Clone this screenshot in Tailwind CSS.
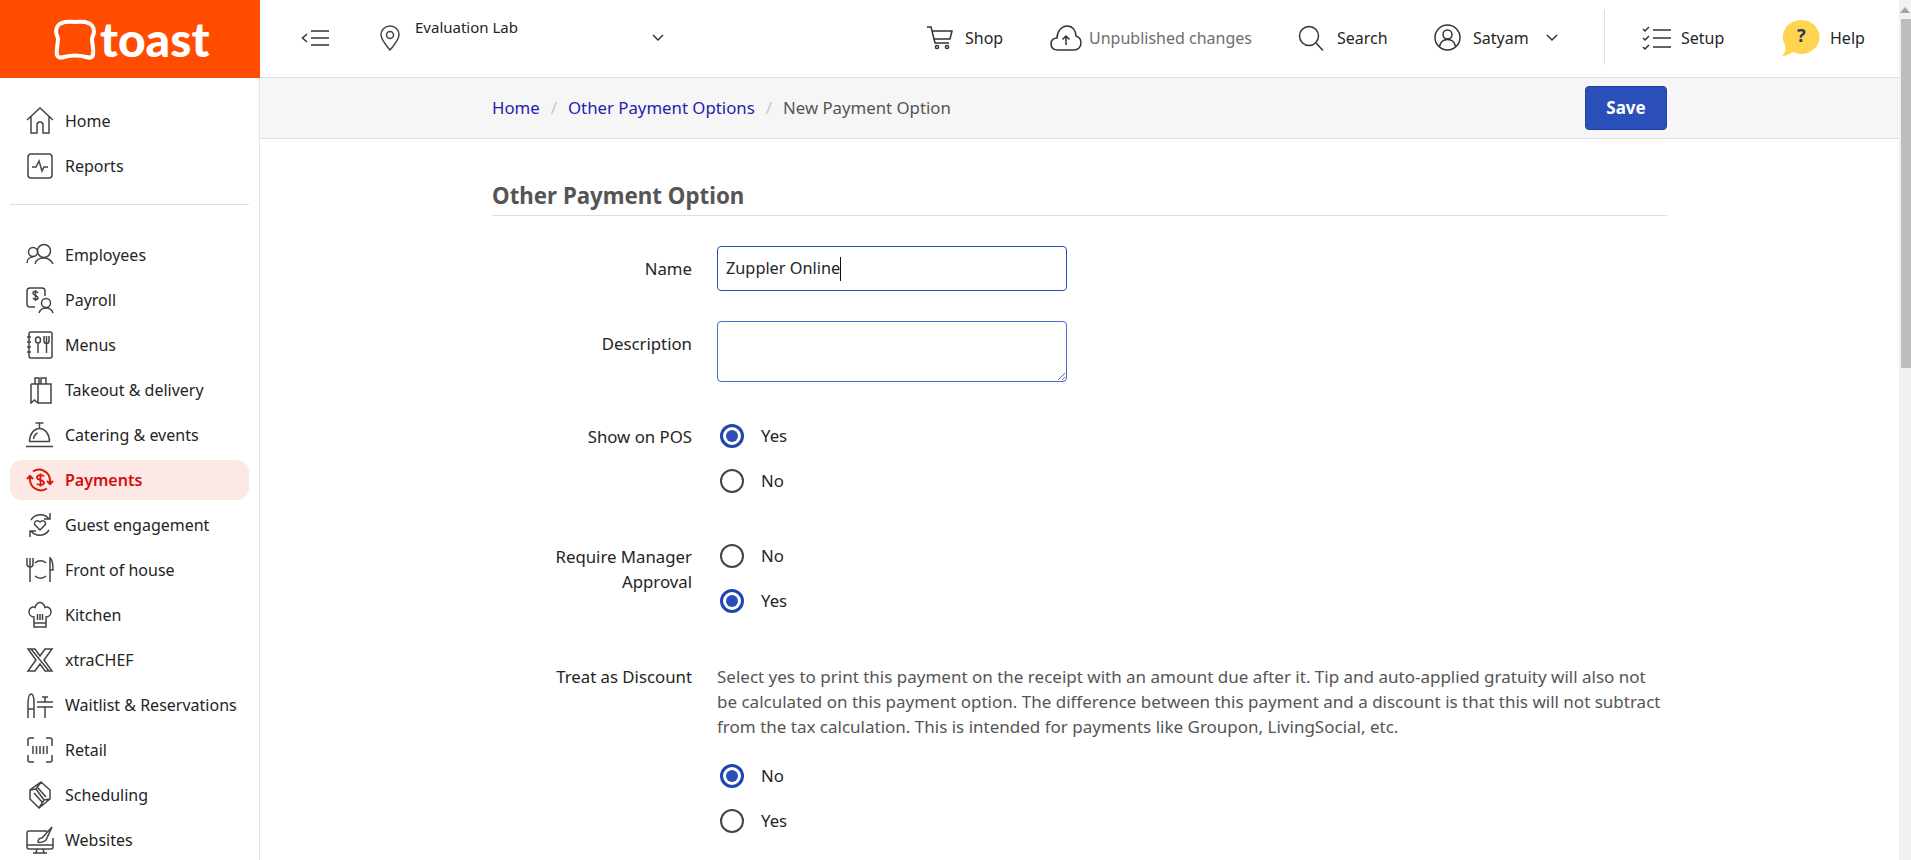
<!DOCTYPE html>
<html lang="en">
<head>
    <meta charset="UTF-8">
    <meta name="viewport" content="width=device-width, initial-scale=1.0">
    <title>New Payment Option</title>
    <script src="https://cdn.jsdelivr.net/npm/@tailwindcss/browser@4"></script>
</head>
<body class="h-[860px] overflow-hidden bg-white font-['Noto_Sans',sans-serif] text-[16px] text-[#252525]">
<div class="flex h-[860px]">
    <div class="w-[1899px] flex flex-col shrink-0">
        <!-- top bar -->
        <header class="h-[78px] flex shrink-0">
            <div class="w-[260px] h-[78px] bg-[#ff4c00] flex items-center shrink-0 pl-[54px] text-white">
                <svg class="w-[42px] h-[42px] shrink-0 mt-[2px]" viewBox="0 0 42 42" fill="none" stroke="white" stroke-width="4" stroke-linejoin="round"><path d="M21 3c5 0 9-1 13 1 4 1 6 5 6 9 0 3-2 4-2 7 0 5 2 10 1 16-1 3-4 3-7 2-7-2-15-2-22 0-3 1-6 1-7-2-1-6 1-11 1-16 0-3-2-4-2-7 0-4 2-8 6-9 4-2 8-1 13-1z"/></svg>
                <span class="ml-[4px] text-[48px] leading-none font-['Lato',sans-serif] font-black">toast</span>
            </div>
            <div class="flex-1 flex items-center border-b border-[#e0e0e0] pb-[2px]">
                <svg class="ml-[41px] w-[28px] h-[18px] shrink-0" viewBox="0 0 28 18" fill="none" stroke="#333" stroke-width="1.5"><path d="M6 5 1.500 9 6 13M10 2h18M10 9h18M10 16h18"/></svg>
                <svg class="ml-[51px] w-[20px] h-[26px] shrink-0" viewBox="0 0 20 26" fill="none" stroke="#444" stroke-width="1.5"><path d="M10 25C6 20 1 15 1 9.500a9 8.500 0 0 1 18 0C19 15 14 20 10 25z"/><circle cx="10" cy="10" r="3.500"/></svg>
                <span class="ml-[15px] w-[237px] -mt-[21px] shrink-0 text-[15px]">Evaluation Lab</span>
                <svg class="w-[12px] h-[8px] shrink-0" viewBox="0 0 12 8" fill="none" stroke="#333" stroke-width="1.500"><path d="m1 1 5 5 5-5"/></svg>
                <svg class="ml-[263px] w-[26px] h-[24px] shrink-0" viewBox="0 0 26 24" fill="none" stroke="#333" stroke-width="1.500"><path d="M0 1h4l4 16h14M5 5h20l-2 8H7"/><circle cx="10" cy="21" r="1.600"/><circle cx="20" cy="21" r="1.600"/></svg>
                <span class="ml-[12px] w-[38px] shrink-0">Shop</span>
                <svg class="ml-[47px] w-[32px] h-[26px] shrink-0" viewBox="0 0 32 26" fill="none" stroke="#333" stroke-width="1.500"><path d="M8 25C3 25 1 22 1 18.500 1 15 4 13 7 13 7 6 12 1 17 1c6 0 9 5 9 10 3 1 5 4 5 7 0 4-3 7-7 7z"/><path d="M16 20v-9M12.500 14.500 16 11l3.500 3.500"/></svg>
                <span class="ml-[7px] w-[163px] text-[#6e6e6e] shrink-0">Unpublished changes</span>
                <svg class="ml-[46px] w-[26px] h-[26px] shrink-0" viewBox="0 0 26 26" fill="none" stroke="#333" stroke-width="1.500"><circle cx="11" cy="11" r="9.500"/><path d="m18 18 7 7.500"/></svg>
                <span class="ml-[13px] w-[52px] shrink-0">Search</span>
                <svg class="ml-[45px] w-[27px] h-[27px] shrink-0" viewBox="0 0 27 27" fill="none" stroke="#333" stroke-width="1.500"><circle cx="13.500" cy="13.500" r="12.500"/><circle cx="13.500" cy="10.500" r="4.500"/><path d="M5.500 22.500c1-5 4-7 8-7s7 2 8 7"/></svg>
                <span class="ml-[12px] w-[73px] shrink-0">Satyam</span>
                <svg class="w-[12px] h-[8px] shrink-0" viewBox="0 0 12 8" fill="none" stroke="#333" stroke-width="1.500"><path d="m1 1 5 5 5-5"/></svg>
                <div class="ml-[46px] w-px h-[55px] bg-[#dedede] shrink-0"></div>
                <svg class="ml-[37px] w-[29px] h-[24px] shrink-0" viewBox="0 0 29 24" fill="none" stroke="#333" stroke-width="1.500"><path d="m1 3 2 2 4-4M1 12l2 2 4-4M1 21l2 2 4-4M11 4h18M11 12h18M11 21h18"/></svg>
                <span class="ml-[10px] w-[44px] shrink-0">Setup</span>
                <div class="relative ml-[55px] w-[40px] h-[38px] shrink-0">
                    <svg class="w-[40px] h-[38px]" viewBox="0 0 40 38"><path d="M21 1a18 17 0 1 1-8 32c-3 2-7 4-11 4 3-3 4-6 3-11A18 17 0 0 1 21 1z" fill="#ffd54f"/></svg>
                    <span class="absolute left-[17px] top-[3px] font-bold text-[18px] text-[#26375f]">?</span>
                </div>
                <span class="ml-[10px] shrink-0">Help</span>
            </div>
        </header>

        <div class="flex flex-1 min-h-0">
            <!-- sidebar -->
            <nav class="w-[260px] border-r border-[#e4e4e4] shrink-0 pt-[23px]">
                <a class="h-[40px] mb-[5px] mx-[10px] rounded-[12px] flex items-center gap-[11px] pl-[16px]">
                    <svg class="w-[28px] h-[28px] shrink-0" viewBox="0 0 28 28" fill="none" stroke="#444" stroke-width="1.500"><path d="M1 13 14 1l13 12M5 10v16h6v-8a3 3 0 0 1 6 0v8h6V10"/></svg><span>Home</span>
                </a>
                <a class="h-[40px] mb-[5px] mx-[10px] rounded-[12px] flex items-center gap-[11px] pl-[16px]">
                    <svg class="w-[28px] h-[28px] shrink-0" viewBox="0 0 28 28" fill="none" stroke="#444" stroke-width="1.500"><rect x="2" y="2" width="24" height="24" rx="3"/><path d="M6 15h4l3-6 3 10 2-4h4"/></svg><span>Reports</span>
                </a>
                <div class="mx-[10px] mt-[18px] mb-[30px] border-t border-[#dedede]"></div>
                <a class="h-[40px] mb-[5px] mx-[10px] rounded-[12px] flex items-center gap-[11px] pl-[16px]">
                    <svg class="w-[28px] h-[28px] shrink-0" viewBox="0 0 28 28" fill="none" stroke="#444" stroke-width="1.500"><circle cx="18" cy="10" r="6.500"/><circle cx="7" cy="11" r="4.500"/><path d="M1 22c0-4 3-6 6-6M9 23c1-4 5-6 9-6s7 2 9 6"/></svg><span>Employees</span>
                </a>
                <a class="h-[40px] mb-[5px] mx-[10px] rounded-[12px] flex items-center gap-[11px] pl-[16px]">
                    <svg class="w-[28px] h-[28px] shrink-0" viewBox="0 0 28 28" fill="none" stroke="#444" stroke-width="1.500"><path d="M9 21H4a3 3 0 0 1-3-3V5a3 3 0 0 1 3-3h12a3 3 0 0 1 3 3v5"/><circle cx="20" cy="17" r="4.500"/><path d="M13 27c1-3 4-5 7-5s6 2 7 5M12 7c-1-2-5-2-5 0 0 3 5 2 5 5 0 2-4 2-5 0M9.500 4v11"/></svg><span>Payroll</span>
                </a>
                <a class="h-[40px] mb-[5px] mx-[10px] rounded-[12px] flex items-center gap-[11px] pl-[16px]">
                    <svg class="w-[28px] h-[28px] shrink-0" viewBox="0 0 28 28" fill="none" stroke="#444" stroke-width="1.500"><rect x="3" y="1" width="23" height="26" rx="2"/><path d="M1 6h4M1 11h4M1 16h4M1 21h4M12 6a2.500 3 0 0 0 0 6 2.500 3 0 0 0 0-6M12 12v10M18 5v5a2.500 2.500 0 0 0 5 0V5M20.500 5v17"/></svg><span>Menus</span>
                </a>
                <a class="h-[40px] mb-[5px] mx-[10px] rounded-[12px] flex items-center gap-[11px] pl-[16px]">
                    <svg class="w-[28px] h-[28px] shrink-0" viewBox="0 0 28 28" fill="none" stroke="#444" stroke-width="1.500"><path d="M5 8h20v19H12M5 8v19l3.500-3 3.500 3V8M9 8V2h4v6M15 8V2h5v6"/></svg><span>Takeout &amp; delivery</span>
                </a>
                <a class="h-[40px] mb-[5px] mx-[10px] rounded-[12px] flex items-center gap-[11px] pl-[16px]">
                    <svg class="w-[28px] h-[28px] shrink-0" viewBox="0 0 28 28" fill="none" stroke="#444" stroke-width="1.500"><path d="M0 25.500h27M3 20.500h21M3.500 20.500a10 13 0 0 1 20 0M13.500 7.500V2M9.500 2h8M7.500 18a6 8 0 0 1 4-6"/></svg><span>Catering &amp; events</span>
                </a>
                <a class="h-[40px] mb-[5px] mx-[10px] rounded-[12px] bg-[#fce8e5] flex items-center gap-[11px] pl-[16px] text-[#d40f0f] font-semibold">
                    <svg class="w-[28px] h-[28px] shrink-0" viewBox="0 0 28 28" fill="none" stroke="#d8190f" stroke-width="2"><path d="M4 11v3a11 11 0 0 0 17 8.500M24 17v-3A11 11 0 0 0 7 5.500M1 13l3-3 3 3M21 15l3 3 3-3"/><path d="M18 10.500c-1-2-7-2-7 .8 0 3.700 7 1.700 7 5.500 0 2.700-6 2.700-7 .8M14.500 7.500v13" stroke-width="1.800"/></svg><span>Payments</span>
                </a>
                <a class="h-[40px] mb-[5px] mx-[10px] rounded-[12px] flex items-center gap-[11px] pl-[16px]">
                    <svg class="w-[28px] h-[28px] shrink-0" viewBox="0 0 28 28" fill="none" stroke="#444" stroke-width="1.500"><path d="M5 9A11 11 0 0 1 23 8M24 2v6h-6M23 19A11 11 0 0 1 5 20M4 26v-6h6M14 19l-5-5c-2-3 2-6 5-3 3-3 7 0 5 3z"/></svg><span>Guest engagement</span>
                </a>
                <a class="h-[40px] mb-[5px] mx-[10px] rounded-[12px] flex items-center gap-[11px] pl-[16px]">
                    <svg class="w-[28px] h-[28px] shrink-0" viewBox="0 0 28 28" fill="none" stroke="#444" stroke-width="1.500"><path d="M1 2v6c0 2 1.500 3 3 3s3-1 3-3V2M4 2v24M9 7c3-3 8-3 11 0M9 20c3 3 8 3 11 0M24 26V2c2 1 3 6 3 12h-3"/></svg><span>Front of house</span>
                </a>
                <a class="h-[40px] mb-[5px] mx-[10px] rounded-[12px] flex items-center gap-[11px] pl-[16px]">
                    <svg class="w-[28px] h-[28px] shrink-0" viewBox="0 0 28 28" fill="none" stroke="#444" stroke-width="1.500"><path d="M8 16C5 16 3 13.500 3 10.500c0-3 3-5.500 6-4 1-3 3-5 5-5s4 2 5 5c3-1.500 6 1 6 4 0 3-2 5.500-5 5.500v10H8zM8 22h12M11.500 13v6M14 13v6M16.500 13v6"/></svg><span>Kitchen</span>
                </a>
                <a class="h-[40px] mb-[5px] mx-[10px] rounded-[12px] flex items-center gap-[11px] pl-[16px]">
                    <svg class="w-[28px] h-[28px] shrink-0" viewBox="0 0 28 28" fill="none" stroke="#444" stroke-width="1.500"><path d="M2 3h7l5 7 5-7h7l-8 11 8 11h-7l-5-7-5 7H2l8-11zM5 3l18 22"/></svg><span>xtraCHEF</span>
                </a>
                <a class="h-[40px] mb-[5px] mx-[10px] rounded-[12px] flex items-center gap-[11px] pl-[16px]">
                    <svg class="w-[28px] h-[28px] shrink-0" viewBox="0 0 28 28" fill="none" stroke="#444" stroke-width="1.500"><path d="M2 27V14c0-6 1-11 3-11s3 4 3 9v15M2 18h6M11 11h16M11 16h16M19 16v11M19 11V6h-3M19 6h3"/></svg><span>Waitlist &amp; Reservations</span>
                </a>
                <a class="h-[40px] mb-[5px] mx-[10px] rounded-[12px] flex items-center gap-[11px] pl-[16px]">
                    <svg class="w-[28px] h-[28px] shrink-0" viewBox="0 0 28 28" fill="none" stroke="#444" stroke-width="1.500"><path d="M2 10V4a2 2 0 0 1 2-2h4M20 2h4a2 2 0 0 1 2 2v6M2 19v5a2 2 0 0 0 2 2h4M20 26h4a2 2 0 0 0 2-2v-5M7 10v8M10.500 10v8M14 10v8M17.500 10v8M21 10v8"/></svg><span>Retail</span>
                </a>
                <a class="h-[40px] mb-[5px] mx-[10px] rounded-[12px] flex items-center gap-[11px] pl-[16px]">
                    <svg class="w-[28px] h-[28px] shrink-0" viewBox="0 0 28 28" fill="none" stroke="#444" stroke-width="1.500"><path d="M15 1 24 9v9L13 27 4 18V9zM4 9l6-1 5-7M24 18l-6 1-5 8M10 8l8 11M8 12l8 9M12 7l8 9"/></svg><span>Scheduling</span>
                </a>
                <a class="h-[40px] mb-[5px] mx-[10px] rounded-[12px] flex items-center gap-[11px] pl-[16px]">
                    <svg class="w-[28px] h-[28px] shrink-0" viewBox="0 0 28 28" fill="none" stroke="#444" stroke-width="1.500"><path d="M21 5H3a2 2 0 0 0-2 2v14a2 2 0 0 0 2 2h22a2 2 0 0 0 2-2V12M1 19h26M11 23l-1 4M17 23l1 4M7 27h14M12 16c0-3 2-4 4-4l10-11-6 13c-2 2-6 3-8 2z"/></svg><span>Websites</span>
                </a>
            </nav>

            <main class="flex-1 min-w-0">
                <div class="h-[61px] bg-[#f6f6f6] border-b border-[#dedede] pl-[232px] flex items-center">
                    <div class="w-[1175px] flex items-center justify-between">
                        <div class="flex items-center text-[16.800px]">
                            <a class="text-[#1f23a8]">Home</a>
                            <span class="mx-[11px] text-[#c4c8cc]">/</span>
                            <a class="text-[#1f23a8]">Other Payment Options</a>
                            <span class="mx-[11px] text-[#c4c8cc]">/</span>
                            <span class="text-[#555]">New Payment Option</span>
                        </div>
                        <button class="w-[82px] h-[44px] rounded-[4px] bg-[#2a4fb9] border border-[#1f42a8] text-white font-bold text-[17px]">Save</button>
                    </div>
                </div>

                <form class="ml-[232px] w-[1175px] text-[16.800px]">
                    <h2 class="mt-[43px] pb-[5px] border-b border-[#dedede] text-[22.300px] leading-[28px] font-bold text-[#555]">Other Payment Option</h2>

                    <div class="flex mt-[30px]">
                        <label class="w-[200px] text-right leading-[45px]">Name</label>
                        <div class="ml-[25px] w-[350px] h-[45px] rounded-[4px] border border-[#2a4fb9] flex items-center pl-[8px]">
                            <span class="text-[16.300px]">Zuppler Online</span><span class="w-px h-[24px] bg-[#111]"></span>
                        </div>
                    </div>

                    <div class="flex mt-[30px]">
                        <label class="w-[200px] text-right leading-[25px] pt-[10px]">Description</label>
                        <textarea class="ml-[25px] w-[350px] h-[61px] rounded-[4px] border border-[#4a6bc6] block"></textarea>
                    </div>

                    <div class="flex mt-[42px]">
                        <label class="w-[200px] text-right leading-[25px]">Show on POS</label>
                        <div class="ml-[28px] flex flex-col gap-[21px]">
                            <div class="flex items-center h-[24px] gap-[17px]"><span class="w-[24px] h-[24px] rounded-full border-[3px] border-[#1f45b0] flex items-center justify-center"><span class="w-[12px] h-[12px] rounded-full bg-[#2a4fb9]"></span></span><span>Yes</span></div>
                            <div class="flex items-center h-[24px] gap-[17px]"><span class="w-[24px] h-[24px] rounded-full border-2 border-[#444]"></span><span>No</span></div>
                        </div>
                    </div>

                    <div class="flex mt-[51px]">
                        <label class="w-[200px] text-right leading-[25px]">Require Manager Approval</label>
                        <div class="ml-[28px] flex flex-col gap-[21px]">
                            <div class="flex items-center h-[24px] gap-[17px]"><span class="w-[24px] h-[24px] rounded-full border-2 border-[#444]"></span><span>No</span></div>
                            <div class="flex items-center h-[24px] gap-[17px]"><span class="w-[24px] h-[24px] rounded-full border-[3px] border-[#1f45b0] flex items-center justify-center"><span class="w-[12px] h-[12px] rounded-full bg-[#2a4fb9]"></span></span><span>Yes</span></div>
                        </div>
                    </div>

                    <div class="flex mt-[51px]">
                        <label class="w-[200px] text-right leading-[25px]">Treat as Discount</label>
                        <div class="ml-[25px] flex-1">
                            <p class="leading-[25px] text-[#555] text-[17px]">Select yes to print this payment on the receipt with an amount due after it. Tip and auto-applied gratuity will also not be calculated on this payment option. The difference between this payment and a discount is that this will not subtract from the tax calculation. This is intended for payments like Groupon, LivingSocial, etc.</p>
                            <div class="ml-[3px] mt-[25px] flex flex-col gap-[21px]">
                                <div class="flex items-center h-[24px] gap-[17px]"><span class="w-[24px] h-[24px] rounded-full border-[3px] border-[#1f45b0] flex items-center justify-center"><span class="w-[12px] h-[12px] rounded-full bg-[#2a4fb9]"></span></span><span>No</span></div>
                                <div class="flex items-center h-[24px] gap-[17px]"><span class="w-[24px] h-[24px] rounded-full border-2 border-[#444]"></span><span>Yes</span></div>
                            </div>
                        </div>
                    </div>
                </form>
            </main>
        </div>
    </div>

    <!-- page scrollbar -->
    <div class="w-[12px] h-[860px] bg-[#f1f1f1] shrink-0 flex flex-col items-end">
        <div class="h-[19px] w-[12px] flex items-center justify-center"><span class="w-0 h-0 border-x-[5px] border-x-transparent border-b-[6px] border-b-[#a3a3a3]"></span></div>
        <div class="w-[10px] h-[349px] bg-[#bdbdbd]"></div>
    </div>
</div>
</body>
</html>
